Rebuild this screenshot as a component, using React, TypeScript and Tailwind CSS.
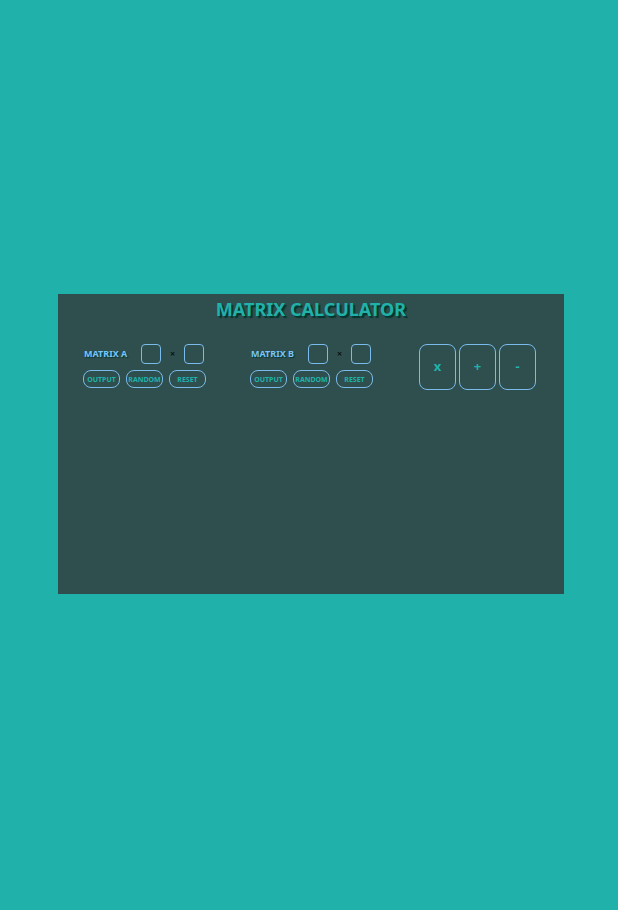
import React from "react";

function SizeInput({ label }: { label: string }) {
  return (
    <input
      type="text"
      aria-label={label}
      className="h-5 w-5 rounded-sm border border-[#79bbea] bg-transparent text-center text-[10px] text-[#6fc3f5] outline-none"
    />
  );
}

function MatrixControls({ name }: { name: string }) {
  return (
    <section className="w-[123px] shrink-0">
      <div className="flex h-5 items-center pr-0.5 pl-px">
        <h2 className="w-[57px] text-[9px] leading-5 font-bold whitespace-nowrap text-[#77c4f8] [text-shadow:1px_1px_1px_#05352f]">
          MATRIX {name}
        </h2>
        <SizeInput label={`Matrix ${name} rows`} />
        <span className="flex-1 text-center text-[9px] leading-5 text-black">×</span>
        <SizeInput label={`Matrix ${name} columns`} />
      </div>
      <div className="mt-1.5 flex justify-between">
        {["OUTPUT", "RANDOM", "RESET"].map((action) => (
          <button
            key={action}
            type="button"
            className="flex h-[18px] w-[37px] items-center justify-center rounded-lg border border-[#79bbea] pt-px text-[7px] leading-4 font-bold whitespace-nowrap text-[#20b2aa]"
          >
            {action}
          </button>
        ))}
      </div>
    </section>
  );
}

export default function App() {
  return (
    <div className="flex min-h-screen flex-col justify-center bg-[#20b2aa] pr-[54px] pb-[22px] pl-[58px] font-['Noto_Sans',sans-serif]">
      <main className="min-h-[300px] bg-[#2f4f4f]">
        <h1 className="pt-[3px] text-center text-[18px] leading-6 font-bold text-[#20b2aa] [text-shadow:2px_2px_1px_#05352f]">
          MATRIX CALCULATOR
        </h1>
        <div className="mt-[23px] flex items-start pr-7 pl-[25px]">
          <MatrixControls name="A" />
          <div className="ml-11">
            <MatrixControls name="B" />
          </div>
          <div className="ml-auto flex gap-[3px]">
            {["x", "+", "-"].map((operation) => (
              <button
                key={operation}
                type="button"
                className="flex h-[46px] w-[37px] items-center justify-center rounded-lg border border-[#79bbea] text-[13px] font-bold text-[#20b2aa]"
              >
                {operation}
              </button>
            ))}
          </div>
        </div>
      </main>
    </div>
  );
}
